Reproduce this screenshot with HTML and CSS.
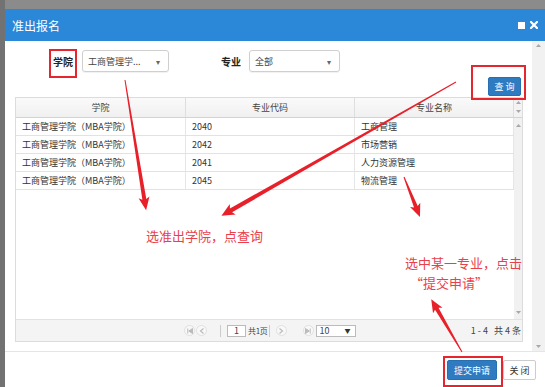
FILE: index.html
```html
<!DOCTYPE html>
<html lang="zh-CN">
<head>
<meta charset="utf-8">
<title>准出报名</title>
<link rel="stylesheet" href="styles.css">
</head>
<body>
<div class="dialog">
  <div class="titlebar">
    <span class="title">准出报名</span>
    <span class="tools">
      <svg class="tool" width="7" height="7" viewBox="0 0 7 7"><rect x="0" y="0" width="7" height="7" fill="#fff"/></svg>
      <svg class="tool" width="8" height="8" viewBox="0 0 8 8"><path d="M1 1 L7 7 M7 1 L1 7" stroke="#fff" stroke-width="2.2" stroke-linecap="square"/></svg>
    </span>
  </div>
  <div class="main">
    <div class="content">
      <div class="filters">
        <span class="lbl lbl-school">学院</span>
        <div class="select sel-school"><span>工商管理学...</span><span class="caret">▾</span></div>
        <span class="lbl lbl-major">专业</span>
        <div class="select sel-major"><span>全部</span><span class="caret">▾</span></div>
      </div>
      <div class="actions"><button class="btn btn-primary btn-query">查 询</button></div>
      <div class="grid">
        <div class="grid-head">
          <div class="th">学院</div>
          <div class="th">专业代码</div>
          <div class="th">专业名称</div>
          <div class="head-gutter">
            <svg width="5" height="3" viewBox="0 0 5 3"><path d="M0 3 L2.5 0 L5 3Z" fill="#a8a8a8"/></svg>
            <svg width="5" height="3" viewBox="0 0 5 3"><path d="M0 0 L2.5 3 L5 0Z" fill="#a8a8a8"/></svg>
          </div>
        </div>
        <div class="grid-body">
          <div class="rows">
            <div class="tr"><div class="td">工商管理学院（MBA学院）</div><div class="td">2040</div><div class="td">工商管理</div></div>
            <div class="tr"><div class="td">工商管理学院（MBA学院）</div><div class="td">2042</div><div class="td">市场营销</div></div>
            <div class="tr"><div class="td">工商管理学院（MBA学院）</div><div class="td">2041</div><div class="td">人力资源管理</div></div>
            <div class="tr"><div class="td">工商管理学院（MBA学院）</div><div class="td">2045</div><div class="td">物流管理</div></div>
          </div>
          <div class="body-gutter">
            <svg width="5" height="3" viewBox="0 0 5 3"><path d="M0 3 L2.5 0 L5 3Z" fill="#a8a8a8"/></svg>
            <svg width="5" height="3" viewBox="0 0 5 3"><path d="M0 0 L2.5 3 L5 0Z" fill="#a8a8a8"/></svg>
          </div>
        </div>
        <div class="pager">
          <span class="pg-ico"><svg width="6" height="6" viewBox="0 0 6 6"><path d="M0.8 0.5 V5.5 M5.5 0.5 L1.8 3 L5.5 5.5Z" stroke="#bbb" fill="#bbb" stroke-width="1"/></svg></span>
          <span class="pg-ico pg-prev"><svg width="6" height="6" viewBox="0 0 6 6"><path d="M4.5 0.5 L1.5 3 L4.5 5.5" stroke="#bbb" fill="none" stroke-width="1.2"/></svg></span>
          <span class="pg-sep"></span>
          <span class="pg-input">1</span>
          <span class="pg-text">共1页</span>
          <span class="pg-sep pg-sep2"></span>
          <span class="pg-ico pg-next"><svg width="6" height="6" viewBox="0 0 6 6"><path d="M1.5 0.5 L4.5 3 L1.5 5.5" stroke="#bbb" fill="none" stroke-width="1.2"/></svg></span>
          <span class="pg-ico pg-last"><svg width="6" height="6" viewBox="0 0 6 6"><path d="M5.2 0.5 V5.5 M0.5 0.5 L4.2 3 L0.5 5.5Z" stroke="#bbb" fill="#bbb" stroke-width="1"/></svg></span>
          <span class="pg-size"><span>10</span><span class="pg-caret">▼</span></span>
          <span class="pg-info">1 - 4&nbsp;&nbsp;&nbsp;共 4 条</span>
        </div>
      </div>
    </div>
    <div class="vscroll">
      <svg width="5" height="3" viewBox="0 0 5 3"><path d="M0 3 L2.5 0 L5 3Z" fill="#a8a8a8"/></svg>
      <svg width="5" height="3" viewBox="0 0 5 3"><path d="M0 0 L2.5 3 L5 0Z" fill="#a8a8a8"/></svg>
    </div>
  </div>
  <div class="footer">
    <button class="btn btn-primary btn-submit">提交申请</button>
    <button class="btn btn-default btn-close">关 闭</button>
  </div>
</div>

<div class="annot">
  <div class="rbox rbox-school"></div>
  <div class="rbox rbox-query"></div>
  <div class="rbox rbox-submit"></div>
  <div class="note note-1">选准出学院，点查询</div>
  <div class="note note-2">选中某一专业，点击</div>
  <div class="note note-3">“提交申请”</div>
  <svg class="arrows" width="545" height="387" viewBox="0 0 545 387">
    <g fill="#e8202a">
      <polygon transform="translate(125 80) rotate(80.8)" points="0,-0.5 121,-2 119,-5.5 132,0 119,5.5 121,2 0,0.5"/>
      <polygon transform="translate(456 82) rotate(150.3)" points="0,-0.5 259,-2.2 257,-6 270,0 257,6 259,2.2 0,0.5"/>
      <polygon transform="translate(404 177) rotate(68.2)" points="0,-0.5 32,-2 30,-5.5 43,0 30,5.5 32,2 0,0.5"/>
      <polygon transform="translate(462 352) rotate(-120.3)" points="0,-0.5 50,-2 48,-5.5 61,0 48,5.5 50,2 0,0.5"/>
    </g>
  </svg>
</div>
</body>
</html>
```

FILE: styles.css
```css
* { box-sizing: border-box; }

body {
  margin: 0;
  width: 545px;
  height: 387px;
  overflow: hidden;
  position: relative;
  background: linear-gradient(to right, #727272 5px, #8b8b8b 5px);
  font-family: "Noto Sans CJK SC", "Noto Sans", sans-serif;
  color: #333;
}

.dialog {
  margin: 9px 0 0 5px;
  width: 540px;
  height: 378px;
  background: #fff;
  display: flex;
  flex-direction: column;
}

.titlebar {
  flex: none;
  height: 32px;
  background: #2b87d8;
  color: #fff;
  display: flex;
  align-items: center;
  justify-content: space-between;
  padding: 0 7px;
}

.title { font-size: 12px; }

.tools {
  display: flex;
  align-items: center;
  gap: 5px;
}
.tool { display: block; }

.main {
  flex: none;
  height: 310px;
  display: flex;
}

.content {
  width: 527px;
  padding: 9px 9px 0 10px;
}

.vscroll {
  width: 13px;
  background: #f1f1f1;
  display: flex;
  flex-direction: column;
  justify-content: space-between;
  align-items: center;
  padding: 3px 0 3px;
}
.vscroll svg, .body-gutter svg, .head-gutter svg { display: block; }

.filters {
  display: flex;
  align-items: center;
  height: 22px;
}

.lbl {
  font-size: 10px;
  font-weight: bold;
  color: #222;
  width: 20px;
}
.lbl-school { margin-left: 38px; }
.lbl-major { margin-left: 52px; }

.select {
  height: 22px;
  border: 1px solid #cfcfcf;
  border-radius: 3px;
  display: flex;
  align-items: center;
  justify-content: space-between;
  padding: 0 8px 0 5px;
  font-size: 9px;
  color: #444;
  box-shadow: 0 1px 1px rgba(0, 0, 0, 0.06);
}
.sel-school { margin-left: 9px; width: 87px; }
.sel-major { margin-left: 8px; width: 91px; }
.caret { font-size: 8px; color: #666; }

.actions {
  display: flex;
  justify-content: flex-end;
  margin-top: 5px;
  padding-right: 2px;
}

.btn {
  font-family: inherit;
  font-size: 9px;
  line-height: 1;
  padding: 0;
  border: 1px solid;
  border-radius: 2px;
}
.btn-primary {
  background: #2f7bc2;
  border-color: #286fb0;
  color: #fff;
}
.btn-default {
  background: #fff;
  border-color: #ccc;
  color: #333;
}
.btn-query { width: 33px; height: 19px; }

.grid {
  margin-top: 1px;
  height: 245px;
  border: 1px solid #dcdcdc;
  display: flex;
  flex-direction: column;
}

.grid-head {
  flex: none;
  height: 20px;
  display: grid;
  grid-template-columns: 170px 169px 159px 8px;
  background: linear-gradient(#fafafa, #f0f0f0);
  border-bottom: 1px solid #c8d5e2;
}
.th {
  font-size: 9px;
  color: #444;
  text-align: center;
  line-height: 19px;
  border-right: 1px solid #dedede;
}
.head-gutter {
  background: #f3f3f3;
  display: flex;
  flex-direction: column;
  justify-content: space-between;
  align-items: center;
  padding: 3px 0 4px;
}

.grid-body {
  flex: 1;
  display: flex;
}
.rows { width: 498px; }
.tr {
  display: grid;
  grid-template-columns: 170px 169px 159px;
  height: 18px;
  border-bottom: 1px solid #e2e2e2;
}
.td {
  font-size: 9px;
  color: #333;
  line-height: 17px;
  padding-left: 6px;
  white-space: nowrap;
  border-right: 1px solid #e6e6e6;
}
.body-gutter {
  flex: 1;
  background: #f1f1f1;
  display: flex;
  flex-direction: column;
  justify-content: space-between;
  align-items: center;
  padding: 6px 0 5px;
}

.pager {
  flex: none;
  height: 22px;
  background: #f4f4f4;
  border-top: 1px solid #e2e2e2;
  display: flex;
  align-items: center;
  padding: 0 1px 0 168px;
  font-size: 9px;
  color: #444;
}
.pg-ico {
  width: 11px;
  height: 11px;
  border: 1px solid #e0e0e0;
  border-radius: 50%;
  background: #f8f8f8;
  display: flex;
  align-items: center;
  justify-content: center;
}
.pg-ico svg { display: block; }
.pg-prev { margin-left: 1px; }
.pg-sep {
  width: 1px;
  height: 12px;
  background: #ccc;
  margin-left: 13px;
}
.pg-input {
  margin-left: 6px;
  width: 19px;
  height: 12px;
  border: 1px solid #bbb;
  background: #fff;
  text-align: center;
  line-height: 10px;
}
.pg-text {
  margin-left: 2px;
  font-size: 8px;
  letter-spacing: -0.3px;
}
.pg-sep2 { margin-left: 1px; }
.pg-next { margin-left: 6px; }
.pg-last { margin-left: 16px; }
.pg-size {
  margin-left: 2px;
  width: 40px;
  height: 12px;
  border: 1px solid #bbb;
  background: #fff;
  display: flex;
  align-items: center;
  justify-content: space-between;
  padding: 0 4px 0 3px;
  line-height: 10px;
}
.pg-caret { font-size: 6px; color: #333; }
.pg-info { margin-left: auto; }

.footer {
  flex: 1;
  border-top: 1px solid #e5e5e5;
  display: flex;
  justify-content: flex-end;
  align-items: flex-start;
  gap: 6px;
  padding: 8px 9px 0 0;
}
.btn-submit { width: 50px; height: 20px; }
.btn-close { width: 33px; height: 20px; }

.annot {
  position: absolute;
  left: 0;
  top: 0;
  width: 545px;
  height: 387px;
  pointer-events: none;
}
.arrows {
  position: absolute;
  left: 0;
  top: 0;
}
.rbox {
  position: absolute;
  border: 2px solid #e5262e;
}
.rbox-school { left: 49px; top: 49px; width: 28px; height: 29px; }
.rbox-query { left: 471px; top: 65px; width: 55px; height: 35px; }
.rbox-submit { left: 443px; top: 356px; width: 60px; height: 31px; }

.note {
  position: absolute;
  color: #e8414d;
  font-size: 13px;
  line-height: 19px;
  white-space: nowrap;
}
.note-1 { left: 146px; top: 226px; }
.note-2 { left: 405px; top: 253px; }
.note-3 { left: 410px; top: 273px; }
```
